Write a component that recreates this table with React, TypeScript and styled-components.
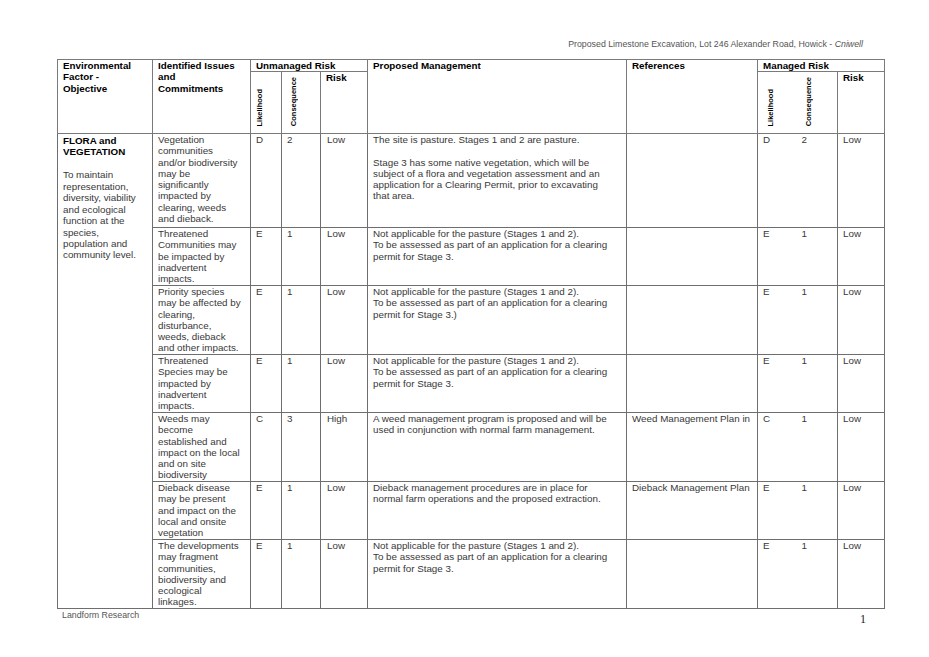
import React from "react";
import styled, { createGlobalStyle } from "styled-components";

const Global = createGlobalStyle`
  html, body { margin: 0; padding: 0; background: #ffffff; }
  body { font-family: "Liberation Sans", Arial, sans-serif; color: #1a1a1a; }
`;

const Page = styled.div`
  width: 929px;
  height: 657px;
  box-sizing: border-box;
  padding: 39px 0 0 57px;
  display: flex;
  flex-direction: column;
`;

const RunningHead = styled.div`
  width: 806px;
  text-align: right;
  font-size: 8.8px;
  line-height: 10px;
  color: #555;
  margin-bottom: 10px;
  em { font-style: italic; }
`;

const Table = styled.table`
  border-collapse: collapse;
  table-layout: fixed;
  width: 827px;
  font-size: 9.8px;
  line-height: 11px;
`;

const Line = styled.div`
  height: 11.3px;
  line-height: 11px;
  white-space: nowrap;
`;

const Head = styled.th<{ $h?: number }>`
  box-sizing: border-box;
  font-weight: bold;
  color: #000;
  text-align: left;
  vertical-align: top;
  padding: 0 5px;
  height: ${(p) => (p.$h ? `${p.$h}px` : "auto")};
  border: 1px solid #7a7a7a;
  white-space: nowrap;
`;

const RotHead = styled.th<{ $noLeft?: boolean; $noRight?: boolean; $pl: number }>`
  vertical-align: bottom;
  text-align: left;
  padding: 0 0 5px ${(p) => p.$pl}px;
  border: 1px solid #7a7a7a;
  ${(p) => (p.$noLeft ? "border-left: none;" : "")}
  ${(p) => (p.$noRight ? "border-right: none;" : "")}
`;

const Rot = styled.span`
  display: inline-block;
  writing-mode: vertical-rl;
  transform: rotate(180deg);
  font-size: 7.5px;
  line-height: 9px;
  font-weight: bold;
  color: #000;
`;

const Cell = styled.td<{ $h?: number; $light?: boolean; $noLeft?: boolean; $noRight?: boolean; $pl?: number }>`
  box-sizing: border-box;
  vertical-align: top;
  text-align: left;
  padding: 0 4px 0 ${(p) => (p.$pl ?? 5)}px;
  height: ${(p) => (p.$h ? `${p.$h}px` : "auto")};
  border: 1px solid #6e6e6e;
  ${(p) => (p.$light ? "border-left-color: #bdbdbd;" : "")}
  ${(p) => (p.$noLeft ? "border-left: none;" : "")}
  ${(p) => (p.$noRight ? "border-right: none;" : "")}
  white-space: nowrap;
  color: #383838;
  overflow: hidden;
`;

const Factor = styled.td`
  vertical-align: top;
  padding: 1px 4px 0 5px;
  border: 1px solid #6e6e6e;
  white-space: nowrap;
  color: #383838;
`;

const FactorTitle = styled.div`
  font-weight: bold;
  color: #000;
  margin-bottom: 11.45px;
`;

const FactorLine = styled.div`
  height: 11.45px;
  line-height: 11px;
`;

const Para = styled.div`
  & + & { margin-top: 11.3px; }
`;

const Footer = styled.div`
  width: 827px;
  display: flex;
  justify-content: space-between;
  align-items: flex-start;
  margin-top: 1px;
`;

const FootLeft = styled.span`
  font-size: 8.8px;
  line-height: 10px;
  color: #555;
  padding-left: 5px;
`;

const PageNo = styled.span`
  font-family: "Liberation Serif", "Times New Roman", serif;
  font-size: 12px;
  line-height: 14px;
  color: #222;
  margin-top: 2px;
  padding-right: 18px;
`;

type Row = {
  h: number;
  issue: string[];
  ul: string;
  uc: string;
  ur: string;
  mgmt: string[][];
  ref: string;
  ml: string;
  mc: string;
  mr: string;
};

const notApplicable = [
  [
    "Not applicable for the pasture (Stages 1 and 2).",
    "To be assessed as part of an application for a clearing",
    "permit for Stage 3.",
  ],
];

const rows: Row[] = [
  {
    h: 94,
    issue: ["Vegetation", "communities", "and/or biodiversity", "may be", "significantly", "impacted by", "clearing, weeds", "and dieback."],
    ul: "D", uc: "2", ur: "Low",
    mgmt: [
      ["The site is pasture. Stages 1 and 2 are pasture."],
      [
        "Stage 3 has some native vegetation, which will be",
        "subject of a flora and vegetation assessment and an",
        "application for a Clearing Permit, prior to excavating",
        "that area.",
      ],
    ],
    ref: "", ml: "D", mc: "2", mr: "Low",
  },
  {
    h: 58,
    issue: ["Threatened", "Communities may", "be impacted by", "inadvertent", "impacts."],
    ul: "E", uc: "1", ur: "Low", mgmt: notApplicable, ref: "", ml: "E", mc: "1", mr: "Low",
  },
  {
    h: 69,
    issue: ["Priority species", "may be affected by", "clearing,", "disturbance,", "weeds, dieback", "and other impacts."],
    ul: "E", uc: "1", ur: "Low",
    mgmt: [
      [
        "Not applicable for the pasture (Stages 1 and 2).",
        "To be assessed as part of an application for a clearing",
        "permit for Stage 3.)",
      ],
    ],
    ref: "", ml: "E", mc: "1", mr: "Low",
  },
  {
    h: 58,
    issue: ["Threatened", "Species may be", "impacted by", "inadvertent", "impacts."],
    ul: "E", uc: "1", ur: "Low", mgmt: notApplicable, ref: "", ml: "E", mc: "1", mr: "Low",
  },
  {
    h: 69,
    issue: ["Weeds may", "become", "established and", "impact on the local", "and on site", "biodiversity"],
    ul: "C", uc: "3", ur: "High",
    mgmt: [["A weed management program is proposed and will be", "used in conjunction with normal farm management."]],
    ref: "Weed Management Plan in", ml: "C", mc: "1", mr: "Low",
  },
  {
    h: 58,
    issue: ["Dieback disease", "may be present", "and impact on the", "local and onsite", "vegetation"],
    ul: "E", uc: "1", ur: "Low",
    mgmt: [["Dieback management procedures are in place for", "normal farm operations and the proposed extraction."]],
    ref: "Dieback Management Plan", ml: "E", mc: "1", mr: "Low",
  },
  {
    h: 69,
    issue: ["The developments", "may fragment", "communities,", "biodiversity and", "ecological", "linkages."],
    ul: "E", uc: "1", ur: "Low", mgmt: notApplicable, ref: "", ml: "E", mc: "1", mr: "Low",
  },
];

const Lines = ({ lines }: { lines: string[] }) => (
  <>
    {lines.map((l, i) => (
      <Line key={i}>{l}</Line>
    ))}
  </>
);

const widths = [95, 98, 31, 39, 47, 259, 131, 38, 42, 47];

export default function App() {
  return (
    <>
      <Global />
      <Page>
        <RunningHead>
          Proposed Limestone Excavation, Lot 246 Alexander Road, Howick - <em>Cniwell</em>
        </RunningHead>
        <Table>
          <colgroup>
            {widths.map((w, i) => (
              <col key={i} style={{ width: w }} />
            ))}
          </colgroup>
          <thead>
            <tr>
              <Head rowSpan={2}>
                <FactorLine>Environmental</FactorLine>
                <FactorLine>Factor -</FactorLine>
                <FactorLine>Objective</FactorLine>
              </Head>
              <Head rowSpan={2}>
                <FactorLine>Identified Issues</FactorLine>
                <FactorLine>and</FactorLine>
                <FactorLine>Commitments</FactorLine>
              </Head>
              <Head colSpan={3} $h={12}>Unmanaged Risk</Head>
              <Head rowSpan={2}>Proposed Management</Head>
              <Head rowSpan={2}>References</Head>
              <Head colSpan={3} $h={12}>Managed Risk</Head>
            </tr>
            <tr>
              <RotHead $pl={4}><Rot>Likelihood</Rot></RotHead>
              <RotHead $pl={7}><Rot>Consequence</Rot></RotHead>
              <Head $h={62}>Risk</Head>
              <RotHead $pl={8} $noRight><Rot>Likelihood</Rot></RotHead>
              <RotHead $pl={8} $noLeft><Rot>Consequence</Rot></RotHead>
              <Head $h={62}>Risk</Head>
            </tr>
          </thead>
          <tbody>
            {rows.map((r, i) => (
              <tr key={i}>
                {i === 0 && (
                  <Factor rowSpan={rows.length}>
                    <FactorTitle>
                      <FactorLine>FLORA and</FactorLine>
                      <FactorLine>VEGETATION</FactorLine>
                    </FactorTitle>
                    {[
                      "To maintain",
                      "representation,",
                      "diversity, viability",
                      "and ecological",
                      "function at the",
                      "species,",
                      "population and",
                      "community level.",
                    ].map((l) => (
                      <FactorLine key={l}>{l}</FactorLine>
                    ))}
                  </Factor>
                )}
                <Cell $h={r.h}>
                  <Lines lines={r.issue} />
                </Cell>
                <Cell $pl={5}>{r.ul}</Cell>
                <Cell $pl={5}>{r.uc}</Cell>
                <Cell $pl={6}>{r.ur}</Cell>
                <Cell $light>
                  {r.mgmt.map((p, j) => (
                    <Para key={j}>
                      <Lines lines={p} />
                    </Para>
                  ))}
                </Cell>
                <Cell>{r.ref}</Cell>
                <Cell $pl={5} $noRight>{r.ml}</Cell>
                <Cell $pl={6} $noLeft>{r.mc}</Cell>
                <Cell $pl={5}>{r.mr}</Cell>
              </tr>
            ))}
          </tbody>
        </Table>
        <Footer>
          <FootLeft>Landform Research</FootLeft>
          <PageNo>1</PageNo>
        </Footer>
      </Page>
    </>
  );
}
